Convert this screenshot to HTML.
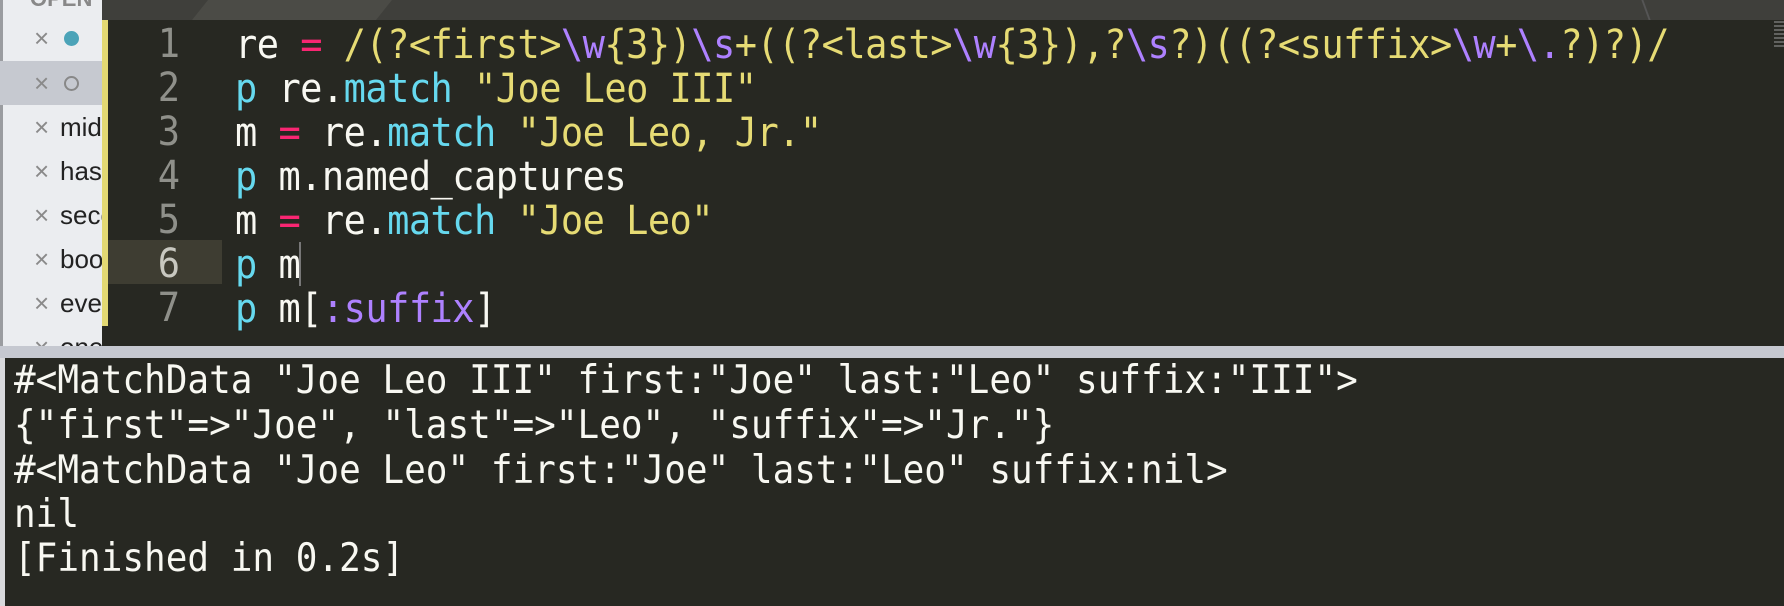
<!DOCTYPE html>
<html><head><meta charset="utf-8"><style>
*{margin:0;padding:0;box-sizing:border-box}
body{width:1784px;height:606px;overflow:hidden;background:#272822;position:relative;font-family:"DejaVu Sans Mono","Liberation Mono",monospace}
.tabbar{position:absolute;left:102px;top:0;width:1682px;height:20px;background:#3f3f3b}
.tab{position:absolute;left:90px;top:0;width:200px;height:20px;background:#4b4b46;clip-path:polygon(8% 0,100% 0,92% 100%,0 100%)}
.side{position:absolute;left:0;top:0;width:102px;height:346px;background:#ebedf0;overflow:hidden;font-family:"Liberation Sans",sans-serif}
.side .strip{position:absolute;left:0;top:0;width:3px;height:346px;background:#9a9ca0}
.row{position:absolute;left:0;width:102px;height:44px;font-size:26px;color:#222;line-height:44px}
.row .x{position:absolute;left:34px;color:#8a8a8a;font-size:26px}
.row .t{position:absolute;left:60px}
.ybar{position:absolute;left:102px;top:20px;width:6px;height:306px;background:#e2d873}
.gut{position:absolute;left:108px;top:240px;width:114px;height:44px;background:#3e3d32}
.ln{position:absolute;left:108px;width:72px;text-align:right;font-size:37px;line-height:44px;color:#8f908a;transform:scaleY(1.08)}
.code{position:absolute;left:235px;font-size:37px;letter-spacing:-0.55px;line-height:44px;color:#f8f8f2;white-space:pre;transform:scaleY(1.08);transform-origin:0 50%}
.w{color:#f8f8f2}.k{color:#f92672}.y{color:#e6db74}.c{color:#66d9ef}.p{color:#ae81ff}
.sep{position:absolute;left:0;top:346px;width:1784px;height:12px;background:#c5c8d0}
.outl{position:absolute;left:0;top:358px;width:5px;height:248px;background:#d8d9dc}
.out{position:absolute;left:14px;font-size:36px;letter-spacing:0;line-height:44px;color:#f8f8f2;white-space:pre;transform:scaleY(1.08);transform-origin:0 50%}
.cur{position:absolute;left:299px;top:242px;width:2px;height:44px;background:#777}
.mini{position:absolute;left:1774px;top:21px;width:10px;height:28px;background:repeating-linear-gradient(#888 0 2px,transparent 2px 4px);opacity:.6}
</style></head><body>
<div class="tabbar"><div class="tab"></div><div style="position:absolute;left:1543px;top:0;width:2px;height:20px;background:#555;transform:skewX(20deg)"></div></div>
<div class="side"><div class="strip"></div>
<div style="position:absolute;left:30px;top:-14px;font-size:22px;font-weight:bold;color:#888">OPEN</div>
<div class="row" style="top:16px"><span class="x">×</span><span style="position:absolute;left:64px;top:15px;width:15px;height:15px;border-radius:50%;background:#4ba3b8"></span></div>
<div class="row" style="top:61px;background:#c6c9d0"><span class="x">×</span><span style="position:absolute;left:64px;top:15px;width:15px;height:15px;border-radius:50%;border:2px solid #888"></span></div>
<div class="row" style="top:105px"><span class="x">×</span><span class="t">middle</span></div>
<div class="row" style="top:149px"><span class="x">×</span><span class="t">hash</span></div>
<div class="row" style="top:193px"><span class="x">×</span><span class="t">second</span></div>
<div class="row" style="top:237px"><span class="x">×</span><span class="t">book</span></div>
<div class="row" style="top:281px"><span class="x">×</span><span class="t">every</span></div>
<div class="row" style="top:325px"><span class="x">×</span><span class="t">one</span></div>
</div>
<div class="ybar"></div>
<div class="gut"></div>
<div class="ln" style="top:22px">1</div><div class="ln" style="top:66px">2</div><div class="ln" style="top:110px">3</div><div class="ln" style="top:154px">4</div><div class="ln" style="top:198px">5</div><div class="ln" style="top:242px;color:#c8c8c0">6</div><div class="ln" style="top:286px">7</div>
<div class="code" style="top:23px">re <span class="k">=</span> <span class="y">/(?&lt;first&gt;</span><span class="p">\w</span><span class="y">{3})</span><span class="p">\s</span><span class="y">+((?&lt;last&gt;</span><span class="p">\w</span><span class="y">{3}),?</span><span class="p">\s</span><span class="y">?)((?&lt;suffix&gt;</span><span class="p">\w</span><span class="y">+</span><span class="p">\.</span><span class="y">?)?)/</span></div>
<div class="code" style="top:67px"><span class="c">p</span> re.<span class="c">match</span> <span class="y">"Joe Leo III"</span></div>
<div class="code" style="top:111px">m <span class="k">=</span> re.<span class="c">match</span> <span class="y">"Joe Leo, Jr."</span></div>
<div class="code" style="top:155px"><span class="c">p</span> m.named_captures</div>
<div class="code" style="top:199px">m <span class="k">=</span> re.<span class="c">match</span> <span class="y">"Joe Leo"</span></div>
<div class="code" style="top:243px"><span class="c">p</span> m</div>
<div class="code" style="top:287px"><span class="c">p</span> m[<span class="p">:suffix</span>]</div>
<div class="cur"></div>
<div class="mini"></div>
<div class="sep"></div>
<div class="outl"></div>
<div class="out" style="top:359px">#&lt;MatchData "Joe Leo III" first:"Joe" last:"Leo" suffix:"III"&gt;</div>
<div class="out" style="top:404px">{"first"=&gt;"Joe", "last"=&gt;"Leo", "suffix"=&gt;"Jr."}</div>
<div class="out" style="top:449px">#&lt;MatchData "Joe Leo" first:"Joe" last:"Leo" suffix:nil&gt;</div>
<div class="out" style="top:493px">nil</div>
<div class="out" style="top:537px">[Finished in 0.2s]</div>
</body></html>
